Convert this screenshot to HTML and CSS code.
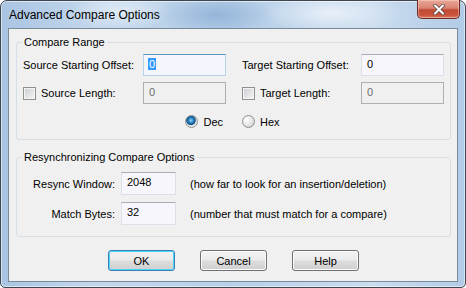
FILE: index.html
```html
<!DOCTYPE html>
<html lang="en">

<head>
    <meta charset="UTF-8">
    <title>Advanced Compare Options</title>
    <link rel="stylesheet" href="styles.css">
</head>

<body>
    <div class="window">
        <div class="titlebar">
            <span class="title">Advanced Compare Options</span>
            <button class="close" type="button" aria-label="Close">
                <svg width="12" height="11" viewBox="0 0 12 11">
                    <path d="M2 1.5 L10 9.5 M10 1.5 L2 9.5" stroke="#5a4a48" stroke-width="3.6" stroke-linecap="round" />
                    <path d="M2 1.5 L10 9.5 M10 1.5 L2 9.5" stroke="#ffffff" stroke-width="2" stroke-linecap="round" />
                </svg>
            </button>
        </div>

        <div class="client">
            <fieldset class="group">
                <legend>Compare Range</legend>
                <div class="range-grid">
                    <label class="lbl">Source Starting Offset:</label>
                    <div class="field focused"><span class="sel">0</span></div>
                    <label class="lbl">Target Starting Offset:</label>
                    <div class="field">0</div>

                    <label class="lbl check"><span class="box"></span>Source Length:</label>
                    <div class="field disabled">0</div>
                    <label class="lbl check"><span class="box"></span>Target Length:</label>
                    <div class="field disabled">0</div>

                    <label class="radio dec"><span class="dot on"></span>Dec</label>
                    <label class="radio hex"><span class="dot"></span>Hex</label>
                </div>
            </fieldset>

            <fieldset class="group resync">
                <legend>Resynchronizing Compare Options</legend>
                <div class="resync-grid">
                    <label class="lbl right">Resync Window:</label>
                    <div class="field tall">2048</div>
                    <span class="hint">(how far to look for an insertion/deletion)</span>

                    <label class="lbl right">Match Bytes:</label>
                    <div class="field tall">32</div>
                    <span class="hint">(number that must match for a compare)</span>
                </div>
            </fieldset>

            <div class="buttons">
                <button class="btn default" type="button">OK</button>
                <button class="btn" type="button">Cancel</button>
                <button class="btn" type="button">Help</button>
            </div>
        </div>
    </div>
</body>

</html>
```

FILE: styles.css
```css
body {
    margin: 0;
    width: 466px;
    height: 288px;
    overflow: hidden;
    background: #ffffff;
    font-family: "Liberation Sans", Arial, sans-serif;
    font-size: 11px;
    color: #000000;
}

.window {
    box-sizing: border-box;
    width: 466px;
    height: 288px;
    border: 1px solid #3e4650;
    border-radius: 7px 7px 5px 5px;
    padding: 0 7px 5px 7px;
    display: flex;
    flex-direction: column;
    background:
        radial-gradient(ellipse 60px 22px at 215px 14px, rgba(120, 160, 205, 0.55), rgba(120, 160, 205, 0)),
        radial-gradient(ellipse 50px 20px at 120px 10px, rgba(235, 243, 250, 0.7), rgba(235, 243, 250, 0)),
        radial-gradient(ellipse 70px 20px at 330px 12px, rgba(240, 246, 252, 0.8), rgba(240, 246, 252, 0)),
        linear-gradient(to right, #a9c4e2 0%, #c3d7ec 20%, #b7cfe8 50%, #cadcee 80%, #b2cbe6 100%);
    box-shadow: inset 0 0 0 1px rgba(255, 255, 255, 0.55);
}

.titlebar {
    height: 27px;
    display: flex;
    align-items: flex-start;
    flex-shrink: 0;
}

.title {
    font-size: 12px;
    line-height: 14px;
    margin-top: 7px;
    margin-left: 1px;
    color: #000000;
}

.close {
    margin-left: auto;
    margin-right: -2px;
    width: 43px;
    height: 19px;
    margin-top: -1px;
    padding: 0;
    border: 1px solid #6b2b22;
    border-top: none;
    border-radius: 0 0 5px 5px;
    background: linear-gradient(to bottom, #e9a898 0%, #d98373 45%, #c24a36 55%, #c9543c 85%, #d9806a 100%);
    box-shadow: inset 0 0 0 1px rgba(255, 220, 210, 0.45);
    display: flex;
    align-items: center;
    justify-content: center;
}

.client {
    flex: 1;
    border: 1px solid #7b8a99;
    background: #f0f0f0;
    padding: 0 6px 0 7px;
    display: flex;
    flex-direction: column;
}

.group {
    margin: 7px 0 0 0;
    padding: 0 6px 11px 6px;
    border: 1px solid #d5dfe5;
    border-radius: 3px;
    min-width: 0;
}

.group legend {
    padding: 0 2px;
    line-height: 13px;
    margin-left: -1px;
}

.range-grid {
    margin-top: 5px;
    display: grid;
    grid-template-columns: 120px 83px 16px 119px 83px;
    grid-template-rows: 22px 22px 18px;
    row-gap: 6px;
    align-items: center;
}

.range-grid .lbl:nth-of-type(2),
.range-grid .lbl:nth-of-type(4) {
    grid-column: 4;
}

.lbl {
    display: flex;
    align-items: center;
    white-space: nowrap;
}

.lbl.right {
    justify-content: flex-end;
}

.box {
    box-sizing: border-box;
    width: 13px;
    height: 13px;
    margin-right: 5px;
    border: 1px solid #8e8f8f;
    box-shadow: inset 0 0 0 1px #f4f4f4;
    background: linear-gradient(135deg, #c9ccd1 0%, #e3e4e6 55%, #f7f7f7 100%);
}

.field {
    box-sizing: border-box;
    height: 22px;
    padding: 2px 0 0 5px;
    line-height: 14px;
    border: 1px solid #dbdfe6;
    border-top-color: #abadb3;
    background: #f6f6fc;
}

.field.focused {
    border-color: #b5d2e8;
    border-top-color: #5994c2;
    background: #f5f6fd;
}

.field.disabled {
    border-color: #afafaf;
    background: #f0f0f0;
    color: #6d6d6d;
}

.field.tall {
    height: 23px;
}

.sel {
    background: #3399ff;
    color: #ffffff;
    padding: 0 1px;
    margin-left: -1px;
}

.radio {
    display: flex;
    align-items: center;
    height: 13px;
    align-self: end;
}

.radio.dec {
    grid-column: 2;
    justify-self: end;
    margin-right: 3px;
}

.radio.hex {
    grid-column: 4;
}

.dot {
    box-sizing: border-box;
    width: 13px;
    height: 13px;
    margin-right: 5px;
    border-radius: 50%;
    border: 1px solid #8e8f8f;
    background: radial-gradient(circle at 35% 35%, #ffffff 0%, #e6e6e6 50%, #c4c6c9 100%);
}

.dot.on {
    background: radial-gradient(circle at 45% 40%, #8fd4f8 0%, #1a6fb0 35%, #0f4f86 48%, #e4e4e4 58%, #f8f8f8 100%);
}

.resync {
    margin-top: 11px;
}

.resync-grid {
    margin-top: 8px;
    display: grid;
    grid-template-columns: 92px 55px auto;
    column-gap: 6px;
    row-gap: 7px;
    align-items: center;
}

.resync-grid .hint {
    margin-left: 8px;
}

.buttons {
    margin-top: 13px;
    display: flex;
    justify-content: center;
    gap: 25px;
}

.btn {
    box-sizing: border-box;
    width: 67px;
    height: 21px;
    padding: 0;
    font-family: "Liberation Sans", Arial, sans-serif;
    font-size: 11px;
    color: #000000;
    border: 1px solid #707070;
    border-radius: 3px;
    background: linear-gradient(to bottom, #f2f2f2 0%, #ebebeb 48%, #dddddd 52%, #cfcfcf 100%);
    box-shadow: inset 0 0 0 1px #fcfcfc;
}

.btn.default {
    border-color: #3c7fb1;
    box-shadow: inset 0 0 0 1px #48d7fb;
}
```
